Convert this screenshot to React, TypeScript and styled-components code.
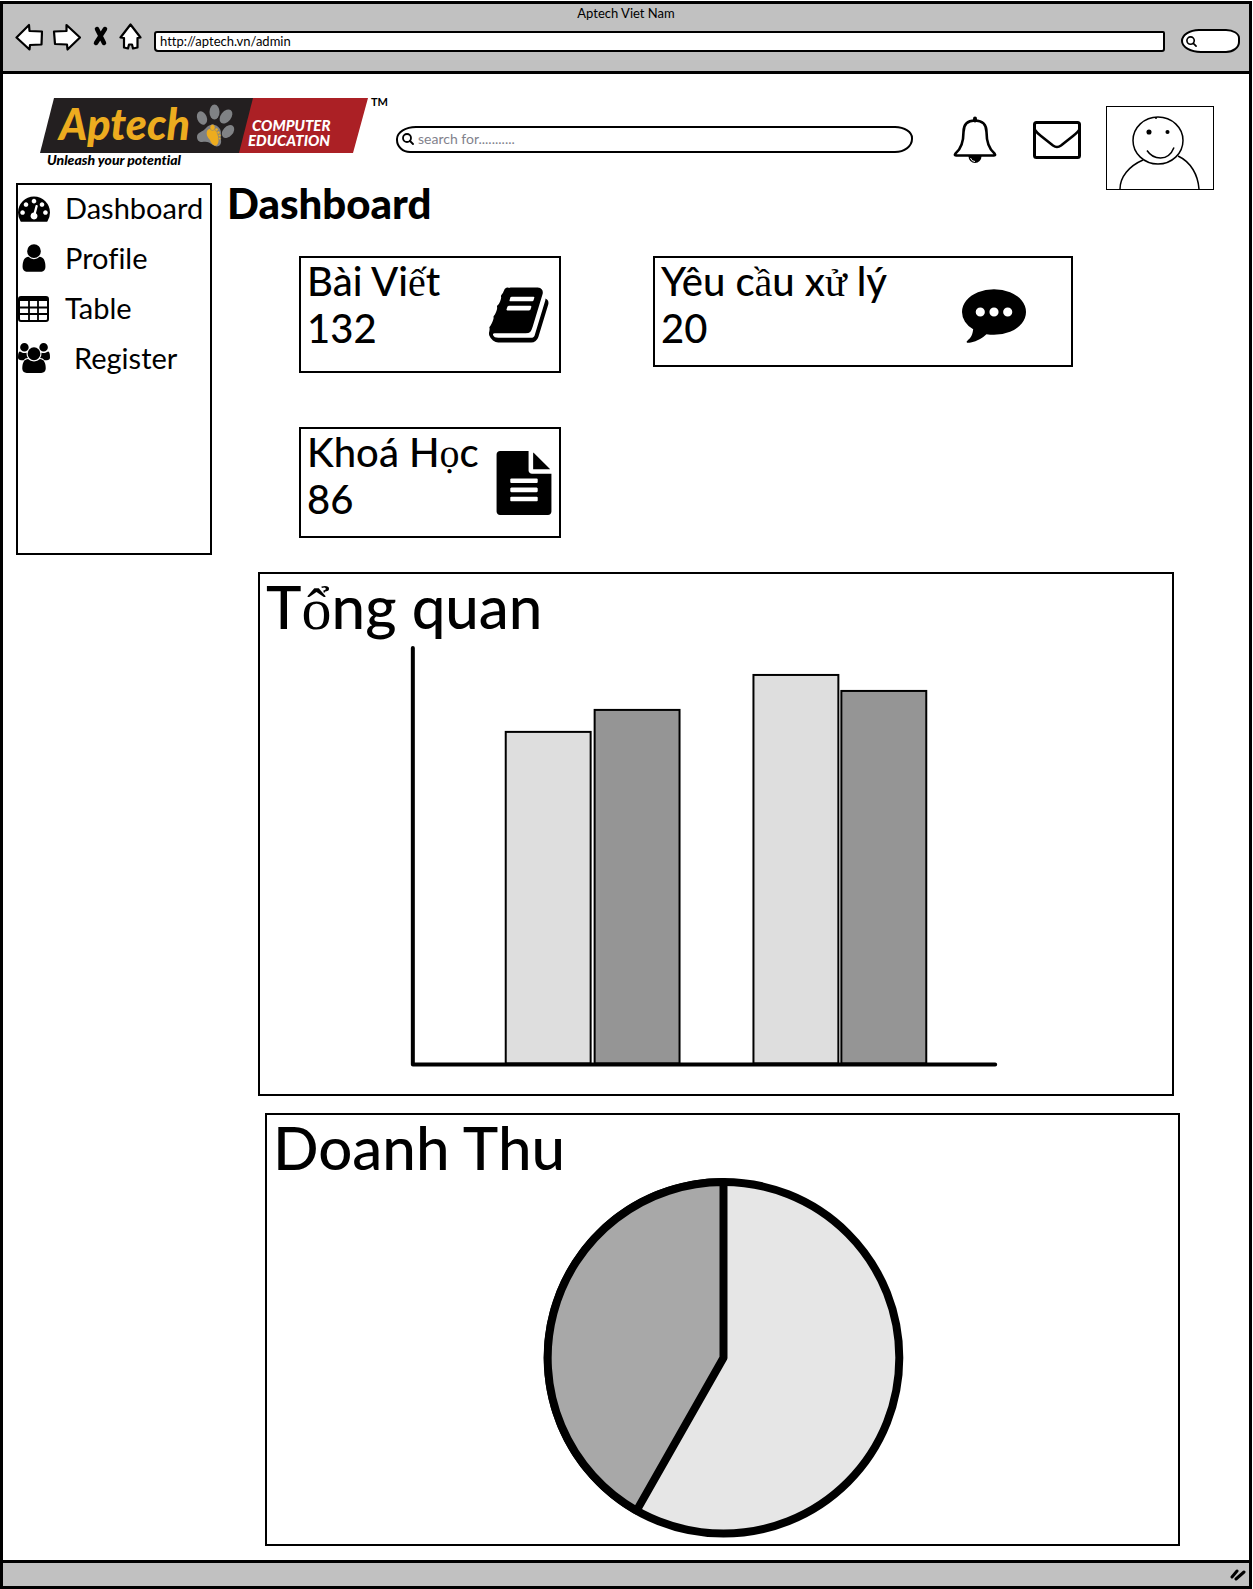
import React from 'react';
import styled, { createGlobalStyle } from 'styled-components';

const INK = '#000';
const CHROME = '#c1c1c1';

const GlobalStyle = createGlobalStyle`
  *, *::before, *::after { box-sizing: border-box; }
  body {
    margin: 0;
    background: #fff;
    color: ${INK};
    font-family: Lato, "Open Sans", sans-serif;
    font-variant-ligatures: none;
  }
  svg { display: block; }
  button { margin: 0; padding: 0; border: 0; background: none; color: inherit; font: inherit; cursor: pointer; }
  input { font: inherit; color: inherit; }
`;

const Window = styled.div`
  margin: 1px 1px 1px 0;
  border: 3px solid ${INK};
`;

/* Browser chrome */

const Chrome = styled.div`
  background: ${CHROME};
  border-bottom: 3px solid ${INK};
  padding-bottom: 15px;
`;

const WindowTitle = styled.div`
  margin-bottom: 4px;
  line-height: 18px;
  font-size: 13px;
  text-align: center;
`;

const Toolbar = styled.div`
  display: flex;
  align-items: center;
  height: 30px;
  padding: 0 9px 0 12px;
`;

const ToolButtons = styled.div`
  display: flex;
  align-items: center;
  gap: 9px;
  margin: 0 12px 8px 0;
`;

const AddressInput = styled.input`
  flex: 1;
  min-width: 0;
  height: 21px;
  padding: 0 4px;
  border: 2px solid ${INK};
  border-radius: 3px 2px 3px 4px;
  background: #fff;
  font-size: 13px;
  outline: none;
`;

const ChromeSearch = styled.label`
  display: flex;
  align-items: center;
  width: 59px;
  height: 24px;
  margin-left: 16px;
  padding-left: 3px;
  border: 2px solid ${INK};
  border-radius: 18px 14px 14px 20px / 12px 9px 11px 12px;
  background: #fff;
`;

const BareInput = styled.input`
  flex: 1;
  min-width: 0;
  width: 0;
  padding: 0;
  border: 0;
  background: transparent;
  outline: none;
  &::placeholder { color: #82828c; opacity: 1; }
`;

/* Page header */

const Header = styled.header`
  display: flex;
  align-items: center;
  min-height: 108px;
  padding: 20px 35px 0 37px;
`;

const LogoLink = styled.a`
  align-self: flex-start;
  color: inherit;
`;

const SearchBox = styled.label`
  display: flex;
  flex: 1;
  align-items: center;
  gap: 4px;
  height: 27px;
  margin: 3px 40px 0 4px;
  padding: 0 20px 2px 4px;
  border: 2px solid ${INK};
  border-radius: 20px 18px 18px 14px / 13px 12px 14px 13px;
  font-size: 14px;
`;

const HeaderActions = styled.div`
  display: flex;
  align-items: center;
  gap: 36px;
  padding-top: 4px;
`;

const Avatar = styled.a`
  align-self: flex-end;
  margin: 0 0 -8px 25px;
  border: 1px solid ${INK};
`;

/* Page body */

const Body = styled.div`
  display: flex;
  align-items: flex-start;
`;

const Sidebar = styled.nav`
  flex: none;
  width: 196px;
  min-height: 372px;
  margin: 1px 0 0 13px;
  border: 2px solid ${INK};
`;

const NavLink = styled.a<{ $indent?: boolean }>`
  display: flex;
  align-items: center;
  gap: ${(p) => (p.$indent ? 24 : 15)}px;
  height: 50px;
  padding-bottom: 5px;
  color: inherit;
  font-size: 29px;
  text-decoration: none;
`;

const Main = styled.main`
  flex: 1;
  min-width: 0;
`;

const Heading = styled.h1`
  margin: 0;
  padding-left: 15px;
  font-size: 42px;
  line-height: 42px;
  font-weight: 900;
`;

const Cards = styled.section`
  display: grid;
  grid-template-columns: minmax(0, 262px) minmax(0, 420px);
  gap: 54px 92px;
  align-items: start;
  margin: 32px 69px 34px 87px;
`;

const Card = styled.article<{ $tall?: boolean; $iconInset: number }>`
  display: flex;
  align-items: center;
  justify-content: space-between;
  height: ${(p) => (p.$tall ? 117 : 111)}px;
  padding: 0 ${(p) => p.$iconInset}px 0 6px;
  border: 2px solid ${INK};
`;

const CardText = styled.div`
  align-self: flex-start;
  font-size: 40px;
  font-weight: 500;
  line-height: 47px;
  white-space: nowrap;
`;

const CardLabel = styled.h2`
  margin: 0;
  font: inherit;
`;

const Serif = styled.span`
  font-family: "Liberation Serif", serif;
  font-weight: 400;
  line-height: 0;
`;

const Panel = styled.section<{ $left: number; $right: number }>`
  margin: 0 ${(p) => p.$right}px 17px ${(p) => p.$left}px;
  border: 2px solid ${INK};
`;

const PanelTitle = styled.h2`
  margin: 0;
  padding: 4px 0 0 6px;
  font-size: 60px;
  line-height: 56px;
  font-weight: 500;
`;

const Chart = styled.svg`
  width: 100%;
  height: auto;
`;

const StatusBar = styled.footer`
  display: flex;
  justify-content: flex-end;
  align-items: center;
  height: 26px;
  margin-top: -3px;
  padding-right: 3px;
  border-top: 3px solid ${INK};
  background: ${CHROME};
`;

/* Icons */

const Glyph = ({ d, size, box = 1792 }: { d: string; size: number; box?: number }) => (
  <svg width={size} height={size} viewBox={`0 0 ${box} 1792`} fill="currentColor" aria-hidden="true">
    <path d={d} />
  </svg>
);

const DOT = 'q0-53-37.5-90.5t-90.5-37.5-90.5 37.500-37.500 90.500 37.500 90.500 90.500 37.500 90.500-37.500 37.500-90.500z';

const GAUGE = `M384 1152${DOT}m192-448${DOT}m428 481l101-382q6-26-7.500-48.500t-38.500-29.500-48 6.500-30 39.500l-101 382q-60 5-107 43.500t-63 98.500q-20 77 20 146t117 89 146-20 89-117q16-60-6-117t-72-91zm660-33${DOT}m-640-640${DOT}m448 192${DOT}m320 448q0 261-141 483-19 29-54 29h-1402q-35 0-54-29-141-221-141-483 0-182 71-348t191-286 286-191 348-71 348 71 286 191 191 286 71 348z`;

const USER =
  'M1536 1399q0 109-62.500 187t-150.500 78h-854q-88 0-150.500-78t-62.500-187q0-85 8.500-160.500t31.500-152 58.500-131 94-89 134.500-34.500q131 128 313 128t313-128q76 0 134.500 34.500t94 89 58.500 131 31.500 152 8.500 160.500zm-256-887q0 159-112.500 271.500t-271.500 112.500-271.500-112.500-112.500-271.500 112.500-271.500 271.500-112.500 271.500 112.500 112.500 271.500z';

const USERS =
  'M593 896q-162 5-265 128h-134q-82 0-138-40.500t-56-118.500q0-353 124-353 6 0 43.500 21t97.500 42.500 119 21.500q67 0 133-23-5 37-5 66 0 139 81 256zm1071 637q0 120-73 189.500t-194 69.500h-874q-121 0-194-69.500t-73-189.500q0-53 3.500-103.500t14-109 26.500-108.500 43-97.500 62-81 85.500-53.500 111.500-20q10 0 43 21.500t73 48 107 48 135 21.500 135-21.500 107-48 73-48 43-21.500q61 0 111.500 20t85.500 53.500 62 81 43 97.500 26.500 108.500 14 109 3.500 103.500zm-1024-1277q0 106-75 181t-181 75-181-75-75-181 75-181 181-75 181 75 75 181zm704 384q0 159-112.500 271.500t-271.500 112.500-271.500-112.500-112.500-271.500 112.500-271.500 271.500-112.500 271.500 112.500 112.500 271.500zm576 225q0 78-56 118.500t-138 40.500h-134q-103-123-265-128 81-117 81-256 0-29-5-66 66 23 133 23 59 0 119-21.500t97.500-42.500 43.500-21q124 0 124 353zm-128-609q0 106-75 181t-181 75-181-75-75-181 75-181 181-75 181 75 75 181z';

const BOOK =
  'M1639 478q40 57 18 129l-275 906q-19 64-76.500 107.500t-122.500 43.500h-923q-77 0-148.500-53.500t-99.500-131.500q-24-67-2-127 0-4 3-27t4-37q1-8-3-21.500t-3-19.500q2-11 8-21t16.500-23.500 16.500-23.500q23-38 45-91.500t30-91.500q3-10 .5-30t-.5-28q3-11 17-28t17-23q21-36 42-92t25-90q1-9-2.500-32t.5-28q4-13 22-30.500t22-22.500q19-26 42.500-84.500t27.500-96.500q1-8-3-25.500t-2-26.500q2-8 9-18t18-23 17-21q8-12 16.500-30.500t15-35 16-36 19.500-32 26.500-23.500 36-11.500 47.500 5.500l-1 3q38-9 51-9h761q74 0 114 56t18 130l-274 906q-36 119-71.500 153.500t-128.500 34.500h-869q-27 0-38 15-11 16-1 43 24 70 144 70h923q29 0 56-15.500t35-41.500l300-987q7-22 5-57 38 15 59 43zm-1064 2q-4 13 2 22.500t20 9.500h608q13 0 25.500-9.500t16.500-22.500l21-64q4-13-2-22.500t-20-9.500h-608q-13 0-25.500 9.500t-16.500 22.500zm-83 256q-4 13 2 22.500t20 9.500h608q13 0 25.500-9.500t16.500-22.500l21-64q4-13-2-22.500t-20-9.500h-608q-13 0-25.500 9.500t-16.500 22.500z';

const COMMENT = `M640 896${DOT}m384 0${DOT}m384 0${DOT}m384 0q0 174-120 321.500t-326 233-450 85.500q-110 0-211-18-173 173-435 229-52 10-86 13-12 1-22-6t-13-18q-4-15 20-37 5-5 23.500-21.500t25.500-23.500 23.500-25.500 24-31.500 20.500-37 20-48 14.500-57.500 12.500-72.500q-146-90-229.500-216.500t-83.500-269.500q0-174 120-321.500t326-233 450-85.500 450 85.500 326 233 120 321.500z`;

const LINE = 'v-64q0-14-9-23t-23-9h-704q-14 0-23 9t-9 23v64q0 14 9 23t23 9h704q14 0 23-9t9-23z';

const FILE = `M1596 476q14 14 28 36h-472v-472q22 14 36 28zm-476 164h544v1056q0 40-28 68t-68 28h-1344q-40 0-68-28t-28-68v-1600q0-40 28-68t68-28h800v544q0 40 28 68t68 28zm160 736${LINE}m0-256${LINE}m0-256${LINE}`;

const TableIcon = () => (
  <svg width="32" height="32" viewBox="0 0 32 32" aria-hidden="true">
    <rect x="1" y="5" width="29" height="24" rx="2" fill="none" stroke={INK} strokeWidth="2" />
    <path d="M1 5h29v4H1z" fill={INK} />
    <path d="M11 8v21M20 8v21M1 15.500h29M1 22h29" fill="none" stroke={INK} strokeWidth="1.800" />
  </svg>
);

const SearchIcon = ({ size }: { size: number }) => (
  <svg width={size} height={size} viewBox="0 0 12 12" fill="none" stroke={INK} strokeWidth="1.800" strokeLinecap="round" aria-hidden="true">
    <circle cx="5" cy="5" r="4" />
    <path d="M8 8l3 3" />
  </svg>
);

const ToolIcon = ({ w, d, solid }: { w: number; d: string; solid?: boolean }) => (
  <svg
    width={w}
    height="28"
    viewBox={`0 0 ${w} 28`}
    fill={solid ? 'none' : '#fff'}
    stroke={INK}
    strokeWidth={solid ? 4.5 : 2.2}
    strokeLinecap="round"
    strokeLinejoin="round"
    aria-hidden="true"
  >
    <path d={d} />
  </svg>
);

const BellIcon = () => (
  <svg width="44" height="48" viewBox="0 0 44 48" aria-hidden="true">
    <circle cx="22" cy="40.500" r="6.500" fill={INK} />
    <path d="M17.500 42q1 3.500 4.500 3.500" fill="none" stroke="#fff" strokeWidth="1" />
    <path
      d="M22 4.500c-8 0-11.500 4.500-11.500 11.500C10.500 27 8 33 2.500 37.500Q1 39.500 3 39.500h38q2 0 .5-2C36 33 33.500 27 33.500 16 33.500 9 30 4.500 22 4.500z"
      fill="#fff"
      stroke={INK}
      strokeWidth="2.600"
      strokeLinejoin="round"
    />
    <path d="M22 2.500v2" stroke={INK} strokeWidth="4" strokeLinecap="round" />
  </svg>
);

const MailIcon = () => (
  <svg width="48" height="38" viewBox="0 0 48 38" fill="none" stroke={INK} strokeLinejoin="round" aria-hidden="true">
    <rect x="1.500" y="1.500" width="45" height="35" rx="2" strokeWidth="3" />
    <path d="M2 9Q4 12 8 15l12 9.500q4 3 8 0L40 15q5-4 6-6" strokeWidth="2.600" />
  </svg>
);

const Portrait = () => (
  <svg width="106" height="82" viewBox="0 0 106 82" fill="none" stroke={INK} strokeWidth="1.500" role="img" aria-label="User portrait">
    <ellipse cx="51" cy="33.500" rx="25" ry="23.500" />
    <path d="M36 53C22 59 13 70 13 82M71 49c13 6 20 19 21 33M40 43.500c6 9 21 12 27-3M49 10v2" />
    <circle cx="42" cy="25" r="1.800" fill={INK} />
    <circle cx="60.500" cy="25" r="1.300" fill={INK} />
  </svg>
);

const Logo = () => (
  <svg width="352" height="76" viewBox="0 -4 352 76" fontFamily="Lato, sans-serif">
    <path d="M14 0h200l-14 55H0z" fill="#231f20" />
    <path d="M213 0h115l-15 55H199z" fill="#ab2025" />
    <text x="19" y="42" fontSize="43" fontWeight="900" fontStyle="italic" fill="#edac1f">Aptech</text>
    <g fill="#808285">
      <ellipse cx="162" cy="20" rx="4.800" ry="7" transform="rotate(-22 162 20)" />
      <ellipse cx="174.500" cy="14" rx="5" ry="7.500" />
      <ellipse cx="186" cy="18.500" rx="5.200" ry="8" transform="rotate(38 186 18.500)" />
      <ellipse cx="188" cy="33.500" rx="5" ry="7.500" transform="rotate(42 188 33.500)" />
      <path d="M157 39c0-5 6-5 9-9 4-5 11-4 14 1 2 4 0 7 1 11 1 6-4 8-8 5-4-3-6-4-11-3-3 0-5-2-5-5z" />
    </g>
    <path d="M167 33c2-4 9-3 10 1 1 5 3 9 0 13-3 2-6-2-7-5-3-3-4-6-3-9z" fill="#edac1f" />
    <g fill="#edac1f" stroke="#808285" strokeWidth="0.500">
      <ellipse cx="172.500" cy="29.500" rx="2.500" ry="3" />
      <circle cx="176.500" cy="31.500" r="1.600" />
      <circle cx="178.500" cy="34.500" r="1.500" />
      <circle cx="179.500" cy="37.500" r="1.300" />
      <circle cx="179.500" cy="40.500" r="1.200" />
    </g>
    <g fontSize="15" fontWeight="900" fontStyle="italic" fill="#fff">
      <text x="212" y="33">COMPUTER</text>
      <text x="208" y="48">EDUCATION</text>
    </g>
    <text x="7" y="67" fontSize="14" fontWeight="900" fontStyle="italic" fill={INK}>Unleash your potential</text>
    <text x="331" y="8" fontSize="11" fontWeight="700" fill={INK}>TM</text>
  </svg>
);

/* Charts */

const BASELINE = 430;
const BARS = [
  { x: 246, height: 332, fill: '#dedede' },
  { x: 335, height: 354, fill: '#959595' },
  { x: 494, height: 389, fill: '#dedede' },
  { x: 582, height: 373, fill: '#959595' },
];

const BarChart = () => (
  <Chart viewBox="0 0 913 461" role="img" aria-label="Bar chart">
    {BARS.map((b) => (
      <rect key={b.x} x={b.x} y={BASELINE - b.height} width="85" height={b.height} fill={b.fill} stroke={INK} strokeWidth="2" />
    ))}
    <path d="M153 14v417h583" fill="none" stroke={INK} strokeWidth="4" strokeLinecap="round" strokeLinejoin="round" />
  </Chart>
);

const PieChart = () => (
  <Chart viewBox="0 0 912 369" role="img" aria-label="Pie chart" stroke={INK} strokeWidth="8" strokeLinejoin="round">
    <circle cx="457" cy="183" r="176" fill="#e6e6e6" />
    <path d="M457 183V7A176 176 0 0 0 370 336z" fill="#a8a8a8" />
  </Chart>
);

export default function App() {
  return (
    <>
      <GlobalStyle />
      <Window>
        <Chrome>
          <WindowTitle>Aptech Viet Nam</WindowTitle>
          <Toolbar>
            <ToolButtons>
              <button aria-label="Back">
                <ToolIcon w={28} d="M1.500 14.500L14 2l.5 6L27 8.500l-.5 13-11.500.5-.5 4.500z" />
              </button>
              <button aria-label="Forward">
                <ToolIcon w={29} d="M2 8.500l12.500-.5V2L28 14.500 15.500 26.500 15 21.500l-12-.5z" />
              </button>
              <button aria-label="Stop">
                <ToolIcon w={20} solid d="M7 6l7 14M15 6L6 20" />
              </button>
              <button aria-label="Home">
                <ToolIcon w={23} d="M11.500 1.500L1.500 14.500l3.500.5v9.500l4 1 1-4h3l1 4 4.500-1V15l3-.5z" />
              </button>
            </ToolButtons>
            <AddressInput aria-label="Address" defaultValue="http://aptech.vn/admin" />
            <ChromeSearch>
              <SearchIcon size={11} />
              <BareInput aria-label="Web search" />
            </ChromeSearch>
          </Toolbar>
        </Chrome>

        <Header>
          <LogoLink href="#home" aria-label="Aptech Computer Education">
            <Logo />
          </LogoLink>
          <SearchBox>
            <SearchIcon size={12} />
            <BareInput aria-label="Search" placeholder="search for..........." />
          </SearchBox>
          <HeaderActions>
            <button aria-label="Notifications">
              <BellIcon />
            </button>
            <button aria-label="Messages">
              <MailIcon />
            </button>
          </HeaderActions>
          <Avatar href="#account">
            <Portrait />
          </Avatar>
        </Header>

        <Body>
          <Sidebar>
            <NavLink href="#dashboard">
              <Glyph d={GAUGE} size={32} />
              Dashboard
            </NavLink>
            <NavLink href="#profile">
              <Glyph d={USER} size={32} />
              Profile
            </NavLink>
            <NavLink href="#table">
              <TableIcon />
              Table
            </NavLink>
            <NavLink href="#register" $indent>
              <Glyph d={USERS} size={32} box={1920} />
              Register
            </NavLink>
          </Sidebar>

          <Main>
            <Heading>Dashboard</Heading>
            <Cards>
              <Card $tall $iconInset={6}>
                <CardText>
                  <CardLabel>Bài Vi<Serif>ế</Serif>t</CardLabel>
                  132
                </CardText>
                <Glyph d={BOOK} size={64} />
              </Card>
              <Card $iconInset={45}>
                <CardText>
                  <CardLabel>Yêu c<Serif>ầ</Serif>u x<Serif>ử</Serif> lý</CardLabel>
                  20
                </CardText>
                <Glyph d={COMMENT} size={64} />
              </Card>
              <Card $iconInset={3}>
                <CardText>
                  <CardLabel>Khoá H<Serif>ọ</Serif>c</CardLabel>
                  86
                </CardText>
                <Glyph d={FILE} size={64} />
              </Card>
            </Cards>

            <Panel $left={46} $right={75}>
              <PanelTitle>T<Serif>ổ</Serif>ng quan</PanelTitle>
              <BarChart />
            </Panel>
            <Panel $left={53} $right={69}>
              <PanelTitle>Doanh Thu</PanelTitle>
              <PieChart />
            </Panel>
          </Main>
        </Body>

        <StatusBar>
          <svg width="16" height="14" viewBox="0 0 16 14" stroke={INK} strokeWidth="3" strokeLinecap="round" aria-hidden="true">
            <path d="M2 9l5-6M6 11l8-7" />
          </svg>
        </StatusBar>
      </Window>
    </>
  );
}
